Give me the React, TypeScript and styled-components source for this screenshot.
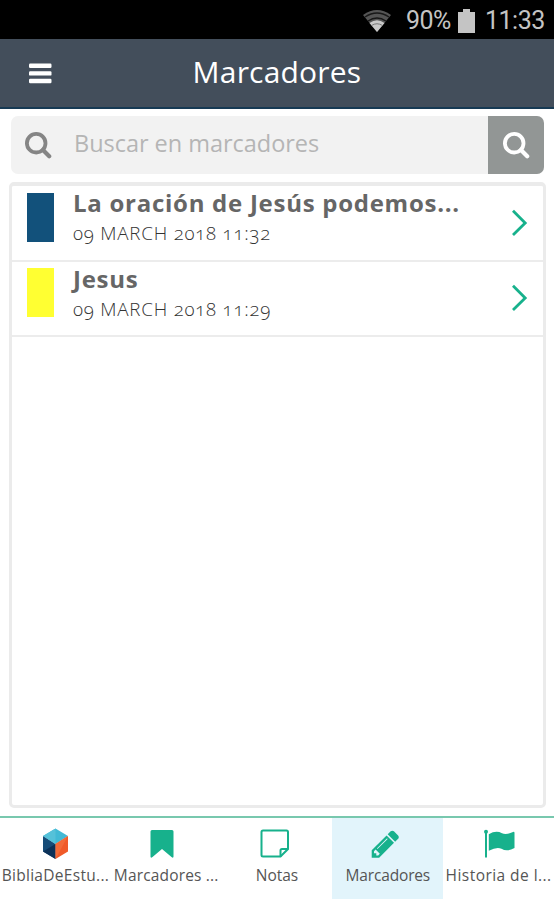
import React from "react";
import styled, { createGlobalStyle, css } from "styled-components";

const GREEN = "#17b18c";

const GlobalStyle = createGlobalStyle`
  * { box-sizing: border-box; }
  body { margin: 0; background: #fff; }
`;

const Screen = styled.main`
  width: 554px;
  height: 900px;
  display: flex;
  flex-direction: column;
  overflow: hidden;
  background: #fff;
  color: #4c4c4c;
  font-family: "Open Sans", "Noto Sans", sans-serif;
`;

const StatusBar = styled.div`
  height: 39px;
  flex: none;
  display: flex;
  align-items: center;
  justify-content: flex-end;
  padding: 2px 9px 0 0;
  background: #000;
  color: #c4c4c4;
  font: 25px/36px Roboto, sans-serif;
`;

const Battery = styled.span`
  width: 47px;
  margin: 0 5px 0 14px;
  letter-spacing: -0.5px;
  white-space: nowrap;
`;

const Clock = styled.span`
  width: 60px;
  margin-left: 10px;
  letter-spacing: -0.5px;
  white-space: nowrap;
`;

const Header = styled.header`
  height: 70px;
  flex: none;
  display: grid;
  grid-template-columns: 80px 1fr 80px;
  align-items: center;
  background: #434e5b;
  border-bottom: 2px solid #173a54;
`;

const MenuButton = styled.button`
  border: 0;
  padding: 0 0 0 29px;
  background: none;
  display: flex;
`;

const Title = styled.h1`
  margin: 0;
  padding-bottom: 2px;
  text-align: center;
  color: #fff;
  font: 500 30px/40px "Open Sans", sans-serif;
  letter-spacing: 0.2px;
`;

const SearchBar = styled.div`
  height: 58px;
  flex: none;
  margin: 7px 10px 0 11px;
  display: flex;
  border-radius: 7px;
  overflow: hidden;
  background: #f2f2f2;
`;

const SearchField = styled.div`
  flex: 1;
  display: flex;
  align-items: center;
  padding-left: 13px;
`;

const Placeholder = styled.span`
  margin: -5px 0 0 22px;
  color: #b5b5b5;
  font-size: 23.5px;
  letter-spacing: -0.03px;
`;

const SearchButton = styled.button`
  width: 56px;
  border: 0;
  padding: 0 1px 0 0;
  display: flex;
  align-items: center;
  justify-content: center;
  background: #929695;
`;

const List = styled.section`
  height: 626px;
  flex: none;
  margin: 8px 8px 0 9px;
  border: 3px solid #ebebeb;
  border-top-width: 4px;
  border-radius: 5px;
`;

const Row = styled.article`
  height: 75.5px;
  display: flex;
  align-items: center;
  padding: 0 15px 0 14.5px;
  border-bottom: 2px solid #ececec;
`;

const Swatch = styled.span<{ $color: string }>`
  width: 27px;
  height: 49px;
  flex: none;
  margin-top: -11px;
  background: ${(p) => p.$color};
`;

const RowText = styled.div`
  flex: 1;
  align-self: flex-start;
  padding: 1px 0 0 19.5px;
`;

const RowTitle = styled.h2`
  margin: 0;
  color: #666;
  font: 700 24px/32px "Open Sans", sans-serif;
  letter-spacing: 0.73px;
  white-space: nowrap;
`;

const RowDate = styled.time`
  display: block;
  color: #333;
  font-size: 18.8px;
  line-height: 28px;
  font-weight: 300;
  font-variant-numeric: oldstyle-nums;
  letter-spacing: 0.77px;
`;

const TabBar = styled.nav`
  height: 84px;
  flex: none;
  margin-top: 8px;
  display: grid;
  grid-template-columns: repeat(5, 1fr);
  border-top: 2px solid #78c8ae;
`;

const Tab = styled.button<{ $active?: boolean }>`
  height: 81px;
  min-width: 0;
  border: 0;
  padding: 10px 0 0;
  display: flex;
  flex-direction: column;
  align-items: center;
  background: transparent;
  color: #555;
  font: 15.5px/24px "Open Sans", sans-serif;
  ${(p) => p.$active && css`background: #e2f4fb;`}
`;

const TabIcon = styled.span<{ $shift: number }>`
  display: flex;
  transform: translateX(${(p) => p.$shift}px);
`;

const TabLabel = styled.span<{ $spacing: number }>`
  margin-top: 3px;
  white-space: nowrap;
  letter-spacing: ${(p) => p.$spacing}px;
`;

const Search = ({ color }: { color: string }) => (
  <svg width="28" height="28" viewBox="0 0 28 28" fill="none" stroke={color}>
    <circle cx="12.2" cy="12.2" r="9.3" strokeWidth="3.8" />
    <path d="M19 19l6.2 6.2" strokeWidth="4.2" strokeLinecap="round" />
  </svg>
);

const Chevron = () => (
  <svg width="18" height="28" viewBox="0 0 18 28" fill="none" stroke={GREEN} strokeWidth="2.8">
    <path d="M3 1.7L15.2 13.9L3 26" />
  </svg>
);

const Wifi = () => (
  <svg width="30" height="24" viewBox="0 0 30 24">
    <path d="M1 6Q15-4 29 6L15 23Z" fill="#555" />
    <path d="M3 8Q15 0 27 8M6 12Q15 6 24 12" fill="none" stroke="#181818" strokeWidth="1.4" />
    <path d="M7.5 14Q15 8.5 22.5 14L15 23Z" fill="#c9c9c9" />
    <path d="M9.5 16.5Q15 13 20.5 16.5" fill="none" stroke="#777" />
  </svg>
);

const CubeIcon = () => (
  <svg width="26" height="32" viewBox="0 0 26 32">
    <path d="M13 0.5L25.5 8L13 16L0.5 8Z" fill="#42b9d5" />
    <path d="M0.5 8L13 16V31L0.5 23.5Z" fill="#164c78" />
    <path d="M25.5 8V23.5L13 31V16Z" fill="#f05a29" />
    <path d="M13 0.5V16L0.5 8Z" fill="#55c1d9" />
    <path d="M0.5 23.5L13 16V31Z" fill="#0c3158" />
    <path d="M25.5 8L13 31V16Z" fill="#f26a38" />
  </svg>
);

const BookmarkIcon = () => (
  <svg width="26" height="32" viewBox="0 0 26 32">
    <path d="M3 2H23Q24.5 2 24.5 3.5V28.5Q24.5 30.5 22.5 29L13 21L3.5 29Q1.5 30.5 1.5 28.5V3.5Q1.5 2 3 2Z" fill={GREEN} />
  </svg>
);

const NoteIcon = () => (
  <svg width="30" height="32" viewBox="0 0 30 32" fill="none" stroke={GREEN} strokeWidth="2">
    <path d="M2.5 2.5H26.5Q28 2.5 28 4V21L20.5 28.5H3Q1.5 28.5 1.5 27V4Q1.5 2.5 3 2.5Z" />
    <path d="M20.5 28.5V22.5Q20.5 21 22 21H28" />
  </svg>
);

const PencilIcon = () => (
  <svg width="32" height="32" viewBox="128 0 1600 1792" fill={GREEN}>
    <path d="M491 1536l91-91-235-235-91 91v107h128v128h107zm523-928q0-22-22-22-10 0-17 7l-542 542q-7 7-7 17 0 22 22 22 10 0 17-7l542-542q7-7 7-17zm-54-192l416 416-832 832h-416v-416zm683 96q0 53-37 90l-166 166-416-416 166-165q36-38 90-38 53 0 91 38l235 234q37 39 37 91z" />
  </svg>
);

const FlagIcon = () => (
  <svg width="34" height="32" viewBox="0 0 34 32" fill={GREEN}>
    <circle cx="4" cy="3.8" r="2" />
    <path d="M3 4H5V29.5H3Z" />
    <path d="M6.8 6.2Q14 2 20 5.2Q24 7.2 31 4Q32.5 3.4 32.5 5V20Q25 24.2 19.5 20.8Q15 18.5 6.8 22.7Z" />
  </svg>
);

const bookmarks = [
  { title: "La oración de Jesús podemos...", date: "09 MARCH 2018 11:32", color: "#12517b" },
  { title: "Jesus", date: "09 MARCH 2018 11:29", color: "#ffff32" },
];

const tabs = [
  { label: "BibliaDeEstu...", icon: <CubeIcon />, spacing: 0.3, shift: 0.5 },
  { label: "Marcadores ...", icon: <BookmarkIcon />, spacing: 0.17, shift: -4 },
  { label: "Notas", icon: <NoteIcon />, spacing: 0, shift: -2 },
  { label: "Marcadores", icon: <PencilIcon />, spacing: -0.15, shift: -2, active: true },
  { label: "Historia de l...", icon: <FlagIcon />, spacing: 0.45, shift: 0 },
];

export default function App() {
  return (
    <Screen>
      <GlobalStyle />
      <StatusBar>
        <Wifi />
        <Battery>90%</Battery>
        <svg width="17" height="24" viewBox="0 0 17 24" fill="#c4c4c4">
          <path d="M5 0H12V3H17V24H0V3H5Z" />
        </svg>
        <Clock>11:33</Clock>
      </StatusBar>
      <Header>
        <MenuButton aria-label="Menu">
          <svg width="23" height="21" viewBox="0 0 23 21" fill="#fff">
            <rect y="0.5" width="22.5" height="4.4" rx="1.2" />
            <rect y="8.2" width="22.5" height="4.4" rx="1.2" />
            <rect y="15.8" width="22.5" height="4.4" rx="1.2" />
          </svg>
        </MenuButton>
        <Title>Marcadores</Title>
      </Header>
      <SearchBar>
        <SearchField>
          <Search color="#858585" />
          <Placeholder>Buscar en marcadores</Placeholder>
        </SearchField>
        <SearchButton aria-label="Buscar">
          <Search color="#fff" />
        </SearchButton>
      </SearchBar>
      <List>
        {bookmarks.map((b) => (
          <Row key={b.date}>
            <Swatch $color={b.color} />
            <RowText>
              <RowTitle>{b.title}</RowTitle>
              <RowDate>{b.date}</RowDate>
            </RowText>
            <Chevron />
          </Row>
        ))}
      </List>
      <TabBar>
        {tabs.map((t, i) => (
          <Tab key={i} $active={t.active}>
            <TabIcon $shift={t.shift}>{t.icon}</TabIcon>
            <TabLabel $spacing={t.spacing}>{t.label}</TabLabel>
          </Tab>
        ))}
      </TabBar>
    </Screen>
  );
}
